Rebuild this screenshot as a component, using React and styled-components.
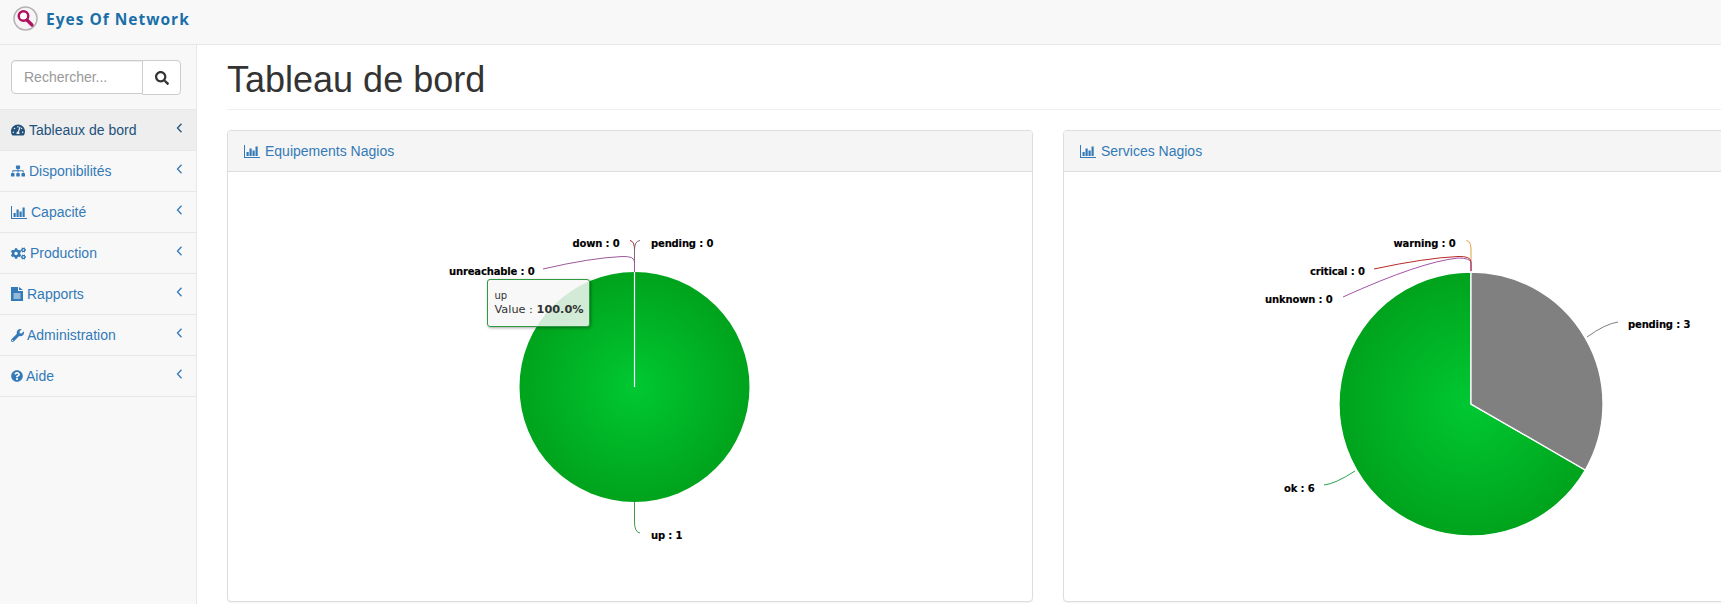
import React from "react";
import styled, { createGlobalStyle } from "styled-components";
import { FaTachometerAlt, FaSitemap, FaCogs, FaWrench, FaQuestionCircle, FaSearch } from "react-icons/fa";

const Global = createGlobalStyle`
  html, body { margin: 0; padding: 0; height: 604px; overflow: hidden; background: #fff; }
  body { font-family: "Liberation Sans", Arial, sans-serif; font-size: 14px; color: #333; }
  * { box-sizing: border-box; }
`;

const Page = styled.div`
  width: 1721px;
  height: 604px;
  display: flex;
  flex-direction: column;
  overflow: hidden;
`;
const TopBar = styled.header`
  height: 45px;
  flex: none;
  display: flex;
  align-items: center;
  gap: 8px;
  padding: 0 0 7px 13px;
  background: #f8f8f8;
  border-bottom: 1px solid #e7e7e7;
`;
const Brand = styled.span`
  font-family: "Open Sans", sans-serif;
  font-weight: 700;
  font-size: 15.5px;
  letter-spacing: 1px;
  color: #1a6fa8;
`;
const Body = styled.div`
  flex: 1;
  display: flex;
  min-height: 0;
`;
const Sidebar = styled.aside`
  width: 197px;
  flex: none;
  background: #f8f8f8;
  border-right: 1px solid #e7e7e7;
`;
const SearchBox = styled.div`
  display: flex;
  padding: 15px 15px 16px 11px;
  border-bottom: 1px solid #e7e7e7;
  height: 65px;
`;
const SearchInput = styled.div`
  width: 132px;
  height: 34px;
  padding: 0 12px;
  display: flex;
  align-items: center;
  background: #fff;
  border: 1px solid #ccc;
  border-radius: 4px 0 0 4px;
  color: #999;
  font-size: 14px;
  box-shadow: inset 0 1px 1px rgba(0,0,0,.075);
`;
const SearchButton = styled.div`
  width: 39px;
  height: 35px;
  margin-left: -1px;
  display: flex;
  align-items: center;
  justify-content: center;
  background: #fff;
  border: 1px solid #ccc;
  border-radius: 0 4px 4px 0;
  color: #333;
  font-size: 14px;
`;
const NavItem = styled.div`
  height: 41px;
  padding: 0 15px 0 11px;
  display: flex;
  align-items: center;
  gap: ${p => p.$gap}px;
  position: relative;
  border-bottom: 1px solid #e7e7e7;
  background: ${p => (p.$active ? "#eee" : "transparent")};
  color: ${p => (p.$active ? "#23527c" : "#337ab7")};
  svg.main { flex: none; }
`;
const Chevron = styled.svg`
  position: absolute;
  left: 176px;
  top: 13px;
`;
const Main = styled.main`
  flex: 1;
  min-width: 0;
  padding: 0 0 0 30px;
  overflow: hidden;
`;
const Title = styled.h1`
  margin: 15px 0 20px;
  padding-bottom: 9px;
  font-size: 36px;
  line-height: 40px;
  font-weight: 500;
  color: #333;
  border-bottom: 1px solid #eee;
`;
const Row = styled.div`
  display: flex;
  gap: 30px;
`;
const Panel = styled.section`
  width: 806px;
  height: 472px;
  flex: none;
  background: #fff;
  border: 1px solid #ddd;
  border-radius: 4px;
  box-shadow: 0 1px 1px rgba(0,0,0,.05);
  overflow: hidden;
`;
const PanelHeading = styled.div`
  height: 41px;
  padding: 0 16px;
  display: flex;
  align-items: center;
  gap: 5px;
  background: #f5f5f5;
  border-bottom: 1px solid #ddd;
  color: #337ab7;
`;
const ChartArea = styled.div`
  position: relative;
  height: 430px;
  svg { display: block; }
`;
const Tooltip = styled.div`
  position: absolute;
  left: 259px;
  top: 107px;
  width: 103px;
  height: 48px;
  padding: 9px 6.5px;
  background: rgba(247,247,247,.85);
  border: 1px solid #2f9a3f;
  border-radius: 3px;
  box-shadow: 1px 1px 3px rgba(0,0,0,.35);
  font-family: "DejaVu Sans", sans-serif;
  font-size: 11.3px;
  line-height: 14px;
  color: #333;
  white-space: nowrap;
  b { font-weight: 700; }
`;
const TooltipName = styled.div`
  font-size: 10px;
`;
const ChartLabel = styled.text`
  font-family: "DejaVu Sans", sans-serif;
  font-size: 10px;
  font-weight: 700;
  letter-spacing: -0.15px;
  fill: #000;
  stroke: #000;
  stroke-width: 0.15px;
`;

const BarsIcon = () => (
  <svg className="main" width="16" height="13" viewBox="0 0 16 13" fill="currentColor">
    <path d="M0 0h1v12h15v1H0z" />
    <path d="M2.5 7h2.2v4H2.5zM5.5 3.5h2.2V11H5.5zM8.5 5.5h2.2V11H8.5zM11.5 1.5h2.2V11h-2.2z" />
  </svg>
);

const FileIcon = () => (
  <svg className="main" width="12" height="14" viewBox="0 0 12 14">
    <path fill="currentColor" fillRule="evenodd" d="M0 0h7v4h5v10H0zM2.5 6.5v1h7v-1zM2.5 8.5v1h7v-1zM2.5 10.5v1h7v-1zM8 0l4 3H8z" />
  </svg>
);

const LogoMark = () => (
  <svg width="25" height="25" viewBox="0 0 25 25">
    <circle cx="12.5" cy="12.5" r="11.5" fill="#f6f4f5" stroke="#b5b0b2" strokeWidth="1.5" />
    <circle cx="10.5" cy="10" r="4.8" fill="#fff" stroke="#b0105f" strokeWidth="2.4" />
    <path d="M14 14l5 5" stroke="#b0105f" strokeWidth="3.2" strokeLinecap="round" />
  </svg>
);

const navItems = [
  { label: "Tableaux de bord", icon: <FaTachometerAlt className="main" size={14} />, gap: 4, active: true },
  { label: "Disponibilités", icon: <FaSitemap className="main" size={14} />, gap: 4 },
  { label: "Capacité", icon: <BarsIcon />, gap: 4 },
  { label: "Production", icon: <FaCogs className="main" size={15} />, gap: 4 },
  { label: "Rapports", icon: <FileIcon />, gap: 4 },
  { label: "Administration", icon: <FaWrench className="main" size={13} />, gap: 3 },
  { label: "Aide", icon: <FaQuestionCircle className="main" size={12} />, gap: 3 },
];

const Pie = ({ id, cx, cy, r, children }) => (
  <>
    <defs>
      <radialGradient id={id} gradientUnits="userSpaceOnUse" cx={cx} cy={cy} r={r}>
        <stop offset="0" stopColor="#00c832" />
        <stop offset="1" stopColor="#00a31c" />
      </radialGradient>
    </defs>
    {children}
  </>
);

const Wire = ({ d, color }) => <path d={d} fill="none" stroke={color} strokeWidth="1" />;

const ChartOne = () => (
  <svg width="804" height="430" viewBox="228 172 804 430">
    <Pie id="g1" cx={634.5} cy={387} r={115}>
      <Wire d="M634.5 272V250Q634.5 241 630 240.5" color="#b02a3a" />
      <Wire d="M634.5 272V250Q634.5 241 640 240.5" color="#7a6a70" />
      <Wire d="M634.5 272V262Q634.5 256 622 256.5Q590 258 543 269" color="#9c5a9c" />
      <Wire d="M634.5 502V522Q634.5 532 640 533" color="#3d9a4c" />
      <circle cx="634.5" cy="387" r="115" fill="url(#g1)" />
      <path d="M634.5 387V272" stroke="#fff" strokeWidth="1.2" />
    </Pie>
    <ChartLabel x="572.5" y="246.5">down : 0</ChartLabel>
    <ChartLabel x="651" y="246.5">pending : 0</ChartLabel>
    <ChartLabel x="449" y="274.5">unreachable : 0</ChartLabel>
    <ChartLabel x="651" y="538.5">up : 1</ChartLabel>
  </svg>
);

const ChartTwo = () => (
  <svg width="804" height="430" viewBox="1064 172 804 430">
    <Pie id="g2" cx={1471} cy={404} r={132}>
      <Wire d="M1471 272V250Q1471 241 1466.5 240.5" color="#e0a040" />
      <Wire d="M1471 272V262Q1471 256 1458 256.5Q1425 258 1374 269" color="#b82a28" />
      <Wire d="M1471 272V263Q1471 258 1458 258Q1420 262 1343 297" color="#a454a4" />
      <Wire d="M1587 337Q1605 324 1618 322" color="#808080" />
      <Wire d="M1355 471Q1335 484 1324 485" color="#2f9f4f" />
      <path d="M1471 404L1471 272A132 132 0 1 0 1585.3 470Z" fill="url(#g2)" stroke="#fff" strokeWidth="1.3" />
      <path d="M1471 404V272A132 132 0 0 1 1585.3 470Z" fill="#808080" stroke="#fff" strokeWidth="1.3" />
    </Pie>
    <ChartLabel x="1393.5" y="246.5">warning : 0</ChartLabel>
    <ChartLabel x="1310" y="274.5">critical : 0</ChartLabel>
    <ChartLabel x="1265" y="302.5">unknown : 0</ChartLabel>
    <ChartLabel x="1628" y="327.5">pending : 3</ChartLabel>
    <ChartLabel x="1284" y="491.5">ok : 6</ChartLabel>
  </svg>
);

const NavChevron = () => (
  <Chevron width="7" height="10" viewBox="0 0 7 10" fill="none" stroke="currentColor" strokeWidth="1.3">
    <path d="M5.5 .8L1.5 5l4 4.2" />
  </Chevron>
);

export default function App() {
  return (
    <Page>
      <Global />
      <TopBar>
        <LogoMark />
        <Brand>Eyes Of Network</Brand>
      </TopBar>
      <Body>
        <Sidebar>
          <SearchBox>
            <SearchInput>Rechercher...</SearchInput>
            <SearchButton><FaSearch size={14} /></SearchButton>
          </SearchBox>
          {navItems.map(item => (
            <NavItem key={item.label} $active={item.active} $gap={item.gap}>
              {item.icon}
              {item.label}
              <NavChevron />
            </NavItem>
          ))}
        </Sidebar>
        <Main>
          <Title>Tableau de bord</Title>
          <Row>
            <Panel>
              <PanelHeading><BarsIcon />Equipements Nagios</PanelHeading>
              <ChartArea>
                <ChartOne />
                <Tooltip>
                  <TooltipName>up</TooltipName>
                  <div>Value : <b>100.0%</b></div>
                </Tooltip>
              </ChartArea>
            </Panel>
            <Panel>
              <PanelHeading><BarsIcon />Services Nagios</PanelHeading>
              <ChartArea>
                <ChartTwo />
              </ChartArea>
            </Panel>
          </Row>
        </Main>
      </Body>
    </Page>
  );
}
